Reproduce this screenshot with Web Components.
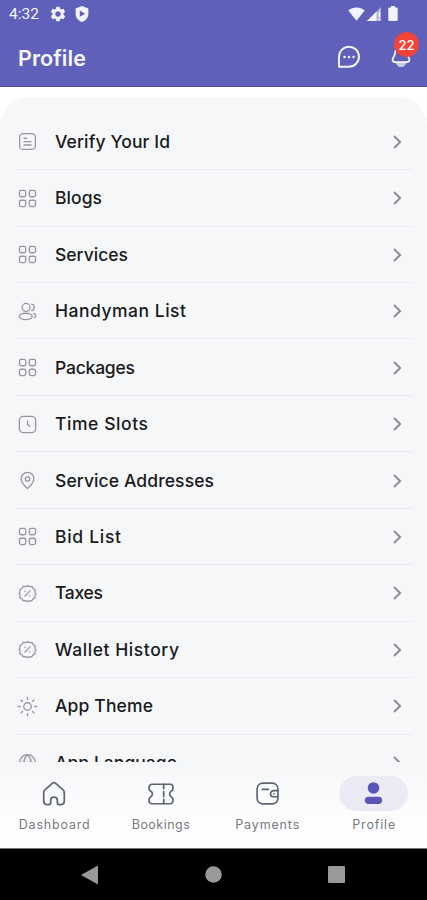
<!DOCTYPE html>
<html lang="en">
<head>
<meta charset="utf-8">
<title>Profile</title>
<style>
html,body{margin:0;height:900px;overflow:hidden;background:#fff;font-family:Inter,"Open Sans",sans-serif}
</style>
</head>
<body>
<profile-screen></profile-screen>
<script>
const ICONS = {
  doc: '<rect x="3" y="3" width="18" height="18" rx="4"/><path d="M8 8.3h3M8 12.2h8M8 16h8"/>',
  grid: '<rect x="2.800" y="2.800" width="7.200" height="7.200" rx="2"/><rect x="14" y="2.800" width="7.200" height="7.200" rx="2"/><rect x="2.800" y="14" width="7.200" height="7.200" rx="2"/><rect x="14" y="14" width="7.200" height="7.200" rx="2"/>',
  users: '<circle cx="10.4" cy="7.300" r="4.500"/><ellipse cx="10" cy="17.600" rx="7.300" ry="3.600"/><path d="M16.8 3.600c3.800.8 3.800 6.600 0 7.400M19 14.200c3 .6 3 3.800.8 4.800"/>',
  clock: '<rect x="2.700" y="2.700" width="18.600" height="18.600" rx="4.500"/><path d="M12 8v4.2l2.8 1.6"/>',
  pin: '<path d="M12 21.3c-2.2-2.2-7.3-6.200-7.300-11.200a7.300 7.300 0 0 1 14.600 0c0 5-5.100 9-7.300 11.200z"/><circle cx="12" cy="10.300" r="2.500"/>',
  tax: '<path d="M12 3l2.400 1.200 2.700-.2 1.300 2.300 2.300 1.400-.2 2.600L21.600 12l-1.100 2.300.1 2.500-2.300 1.400-1.400 2.200-2.600-.2L12 21.200l-2.300-1-2.600.2-1.400-2.200-2.300-1.400.1-2.500L2.400 12l1.100-1.700-.2-2.600 2.300-1.400L6.900 4l2.700.2z"/><path d="M9 15l6-6M9.300 9.400h.2M14.500 14.600h.2"/>',
  sun: '<circle cx="12" cy="12" r="4.300"/><path d="M12 1.500v2.400M12 20.100v2.400M1.500 12h2.400M20.100 12h2.400M4.600 4.600l1.600 1.600M17.800 17.800l1.600 1.600M19.400 4.600l-1.600 1.600M6.200 17.800l-1.600 1.600"/>',
  globe: '<circle cx="12" cy="12" r="9"/><path d="M3 12h18M12 3c-5.500 5-5.500 13 0 18M12 3c5.500 5 5.500 13 0 18"/>',
  chevron: '<path d="M9 5.500l6.800 6.500L9 18.500"/>',
  home: '<path d="M2.500 10.600c0-1.100.3-1.800 1.100-2.400L10.700 2c.8-.7 1.800-.7 2.600 0l7.100 6.200c.8.600 1.100 1.300 1.100 2.400v8.100a3 3 0 0 1-3 3h-1.700c-1 0-1.700-.700-1.700-1.700v-2.300c0-3.800-6.200-3.800-6.200 0V20c0 1-.7 1.700-1.700 1.700H5.500a3 3 0 0 1-3-3z"/>',
  ticket: '<path d="M3.500 3h17a2.500 2.500 0 0 1 2.500 2.500v1.600c0 1-.4 1.500-1.100 1.900-2.600 1.500-2.600 4.500 0 6 .7.400 1.100.9 1.100 1.900v1.600a2.500 2.500 0 0 1-2.500 2.500h-17A2.500 2.500 0 0 1 1 18.500v-1.600c0-1 .4-1.500 1.100-1.900 2.600-1.500 2.600-4.500 0-6C1.400 8.600 1 8.100 1 7.100V5.500A2.500 2.500 0 0 1 3.500 3z"/><path d="M14.500 3v4M14.500 9.800v4.600M14.500 17v4"/>',
  wallet: '<rect x="2" y="2" width="20" height="20" rx="5.500"/><path d="M7 8h6M22 9.300h-4.200a2.900 2.900 0 0 0 0 5.800H22M18 12.200h.3"/>',
  person: '<circle cx="12" cy="6.700" r="5.600" fill="currentColor" stroke="none"/><rect x="3.700" y="15" width="16.600" height="7" rx="3.500" fill="currentColor" stroke="none"/>',
  chat: '<path d="M2 21.700V12a10 10 0 1 1 10 9.700z"/><path d="M7.500 12h.1M12 12h.1M16.500 12h.1" stroke-width="2.400"/>',
  bell: '<path d="M12 2c-4 0-6.500 3-6.500 6.500 0 4-2.700 5-2.700 7.500 0 1.800 2 2.700 4 2.700h10.400c2 0 4-.9 4-2.700 0-2.500-2.700-3.500-2.700-7.500C18.500 5 16 2 12 2z"/><path d="M7 19.600h10l-2.600 2.900c-1.300 1.300-3.500 1.300-4.800 0z" fill="currentColor" opacity=".7"/>'
};

class AppIcon extends HTMLElement {
  connectedCallback() {
    const s = this.getAttribute('size') || 20, w = this.getAttribute('weight') || 1.5;
    this.attachShadow({mode: 'open'}).innerHTML = `<style>:host{display:block;flex:none;width:${s}px;height:${s}px}svg{display:block}</style>
    <svg width="${s}" height="${s}" viewBox="0 0 24 24" fill="none" stroke="currentColor" stroke-width="${w}" stroke-linecap="round" stroke-linejoin="round">${ICONS[this.getAttribute('name')]}</svg>`;
  }
}
customElements.define('app-icon', AppIcon);

/* Single-line text whose tracking is spread to fill the given width. */
class FitText extends HTMLElement {
  connectedCallback() {
    const root = this.attachShadow({mode: 'open'});
    const text = this.getAttribute('text');
    root.innerHTML = `<style>:host{display:block;white-space:nowrap}span{display:inline-block}</style><span>${text}</span>`;
    const span = root.querySelector('span');
    const extra = (+this.getAttribute('width') - span.getBoundingClientRect().width) / (text.length - 1);
    span.style.letterSpacing = extra.toFixed(3) + 'px';
    span.style.marginRight = (-extra).toFixed(3) + 'px';
  }
}
customElements.define('fit-text', FitText);

class StatusBar extends HTMLElement {
  connectedCallback() {
    this.attachShadow({mode: 'open'}).innerHTML = `<style>
      :host{display:flex;align-items:center;height:28px;box-sizing:border-box;padding:0 29px 0 9px;color:#f3f3ff;font:400 15.500px Roboto,sans-serif}
      svg{display:block;flex:none}.gear{margin-left:11px}.shield{margin-left:9px}.end{margin-left:auto;display:flex;align-items:center;gap:2px;margin-top:-1px}.bat{margin-left:5px}
    </style>
    <fit-text text="4:32" width="30"></fit-text>
    <svg class="gear" width="16" height="16" viewBox="0 0 24 24" fill="currentColor" fill-rule="evenodd"><path d="M9.500 1h5l.6 3.200 2 1.200 3.100-1.100 2.500 4.300-2.500 2.200v2.400l2.500 2.200-2.500 4.300-3.100-1.100-2 1.200-.6 3.200h-5l-.6-3.200-2-1.200-3.100 1.100-2.500-4.300 2.500-2.200v-2.400L1.300 8.600l2.500-4.300 3.100 1.100 2-1.200zM12 8a4 4 0 1 0 0 8 4 4 0 0 0 0-8z"/></svg>
    <svg class="shield" width="14" height="16" viewBox="0 0 22 25" fill="currentColor" fill-rule="evenodd"><path d="M11 0l10 4v8c0 6-4 11-10 13C5 23 1 18 1 12V4zM7.500 7v10l8.500-5z"/></svg>
    <div class="end">
      <svg width="17" height="14" viewBox="0 0 17 14" fill="currentColor"><path d="M.3 3.500C4.500-.4 12.500-.4 16.700 3.500L8.500 13.800z"/></svg>
      <svg width="14" height="14" viewBox="0 0 14 14" fill="currentColor"><path d="M14 0v14H0z" opacity=".55"/><path d="M9.500 4.500V14H0zM11.500 5H13v5h-1.500zM11.500 11.500H13V13h-1.500z"/></svg>
      <svg class="bat" width="10" height="15" viewBox="0 0 10 15" fill="currentColor"><path d="M3 0h4v1.500h1.500c.7 0 1.200.5 1.200 1.200v11c0 .7-.5 1.200-1.200 1.200h-7c-.7 0-1.200-.5-1.200-1.200v-11c0-.7.500-1.200 1.200-1.200H3z"/></svg>
    </div>`;
  }
}
customElements.define('status-bar', StatusBar);

class AppHeader extends HTMLElement {
  connectedCallback() {
    this.attachShadow({mode: 'open'}).innerHTML = `<style>
      :host{display:block;height:87px;flex:none;background:#5f60b9;box-shadow:inset 0 -1px #5051a4;color:#f6f6ff}
      .bar{display:flex;align-items:center;height:59px;box-sizing:border-box;padding:0 15px 1px 18px}
      fit-text{font-size:21.500px;font-weight:600;margin-top:2px}
      .actions{margin-left:auto;display:flex;gap:29px}
      .bell{position:relative}
      .badge{position:absolute;left:4px;top:-13px;width:25px;height:25px;border-radius:50%;background:#f44336;color:#fff;display:grid;place-items:center;font-size:13px;font-weight:500}
    </style>
    <status-bar></status-bar>
    <div class="bar"><fit-text text="Profile" width="68"></fit-text>
      <div class="actions"><app-icon name="chat" size="24" weight="1.900"></app-icon>
      <div class="bell"><app-icon name="bell" size="22" weight="1.900"></app-icon><div class="badge">22</div></div></div>
    </div>`;
  }
}
customElements.define('app-header', AppHeader);

class MenuRow extends HTMLElement {
  connectedCallback() {
    const a = n => this.getAttribute(n);
    this.attachShadow({mode: 'open'}).innerHTML = `<style>
      :host{display:flex;align-items:center;flex:none;height:56.440px;box-sizing:border-box;margin:0 15px 0 16px;padding:1px 5px 0 0;border-bottom:1px solid #eaebee;color:#181a20}
      .ic{width:24px;margin-right:15px;display:grid;place-items:center;color:#95979b}
      .ic app-icon{margin-left:-1px}
      fit-text{font-size:17.500px;font-weight:500;line-height:24px}
      .chev{margin-left:auto;color:#8b8d92}
    </style>
    <div class="ic"><app-icon name="${a('icon')}" size="21" weight="1.500"></app-icon></div>
    <fit-text text="${a('label')}" width="${a('width')}"></fit-text>
    <app-icon class="chev" name="chevron" size="20" weight="2.400"></app-icon>`;
  }
}
customElements.define('menu-row', MenuRow);

class MenuPanel extends HTMLElement {
  connectedCallback() {
    this.attachShadow({mode: 'open'}).innerHTML = `<style>
      :host{display:flex;flex-direction:column;flex:none;margin-top:10px;height:665px;box-sizing:border-box;padding-top:16.700px;overflow:hidden;background:#f6f7f9;border-radius:29px 29px 0 0}
    </style><slot></slot>`;
  }
}
customElements.define('menu-panel', MenuPanel);

class NavTab extends HTMLElement {
  connectedCallback() {
    const a = n => this.getAttribute(n), on = this.hasAttribute('active');
    this.attachShadow({mode: 'open'}).innerHTML = `<style>
      :host{display:flex;flex:1;flex-direction:column;align-items:center;color:#6c757d}
      .pill{display:grid;place-items:center;width:69px;height:35px;border-radius:18px;color:${on ? '#5b55b7' : '#5d6573'};background:${on ? '#ebebf6' : 'transparent'}}
      fit-text{font-size:12.500px;line-height:16px;margin-top:6px;color:#777980}
    </style>
    <div class="pill"><app-icon name="${a('icon')}" size="${a('size')}" weight="1.600"></app-icon></div>
    <fit-text text="${a('label')}" width="${a('width')}"></fit-text>`;
  }
}
customElements.define('nav-tab', NavTab);

class BottomNav extends HTMLElement {
  connectedCallback() {
    this.attachShadow({mode: 'open'}).innerHTML = `<style>
      :host{display:flex;flex:none;height:87px;box-sizing:border-box;padding:14px 0 0 1px;background:linear-gradient(#f6f7f9,#fdfdfe 60%,#fff);border-bottom:1px solid #777}
    </style><slot></slot>`;
  }
}
customElements.define('bottom-nav', BottomNav);

class SystemNav extends HTMLElement {
  connectedCallback() {
    this.attachShadow({mode: 'open'}).innerHTML = `<style>
      :host{display:flex;flex:1;align-items:center;justify-content:space-between;background:#000;padding:0 82px 0 81px;color:#999}
      svg{display:block}
    </style>
    <svg width="17" height="20" viewBox="0 0 17 20" fill="currentColor"><path d="M0 10L17 .500v19z"/></svg>
    <svg width="17" height="17" viewBox="0 0 17 17" fill="currentColor"><circle cx="8.500" cy="8.500" r="8.300"/></svg>
    <svg width="17" height="17" viewBox="0 0 17 17" fill="currentColor"><rect width="17" height="17" rx="1"/></svg>`;
  }
}
customElements.define('system-nav', SystemNav);

class ProfileScreen extends HTMLElement {
  connectedCallback() {
    const rows = [['doc','Verify Your Id',115],['grid','Blogs',47],['grid','Services',73],['users','Handyman List',131],['grid','Packages',80],['clock','Time Slots',93],['pin','Service Addresses',159],['grid','Bid List',66],['tax','Taxes',48],['tax','Wallet History',124],['sun','App Theme',98],['globe','App Language',122]];
    const tabs = [['home','Dashboard',71,26],['ticket','Bookings',58,26],['wallet','Payments',64,25],['person','Profile',43,25]];
    this.attachShadow({mode: 'open'}).innerHTML = `<style>:host{display:flex;flex-direction:column;width:427px;height:900px;background:#fff}</style>
    <app-header></app-header>
    <menu-panel>${rows.map(r => `<menu-row icon="${r[0]}" label="${r[1]}" width="${r[2]}"></menu-row>`).join('')}</menu-panel>
    <bottom-nav>${tabs.map((t, i) => `<nav-tab icon="${t[0]}" label="${t[1]}" width="${t[2]}" size="${t[3]}" ${i === 3 ? 'active' : ''}></nav-tab>`).join('')}</bottom-nav>
    <system-nav></system-nav>`;
  }
}
customElements.define('profile-screen', ProfileScreen);
</script>
</body>
</html>
